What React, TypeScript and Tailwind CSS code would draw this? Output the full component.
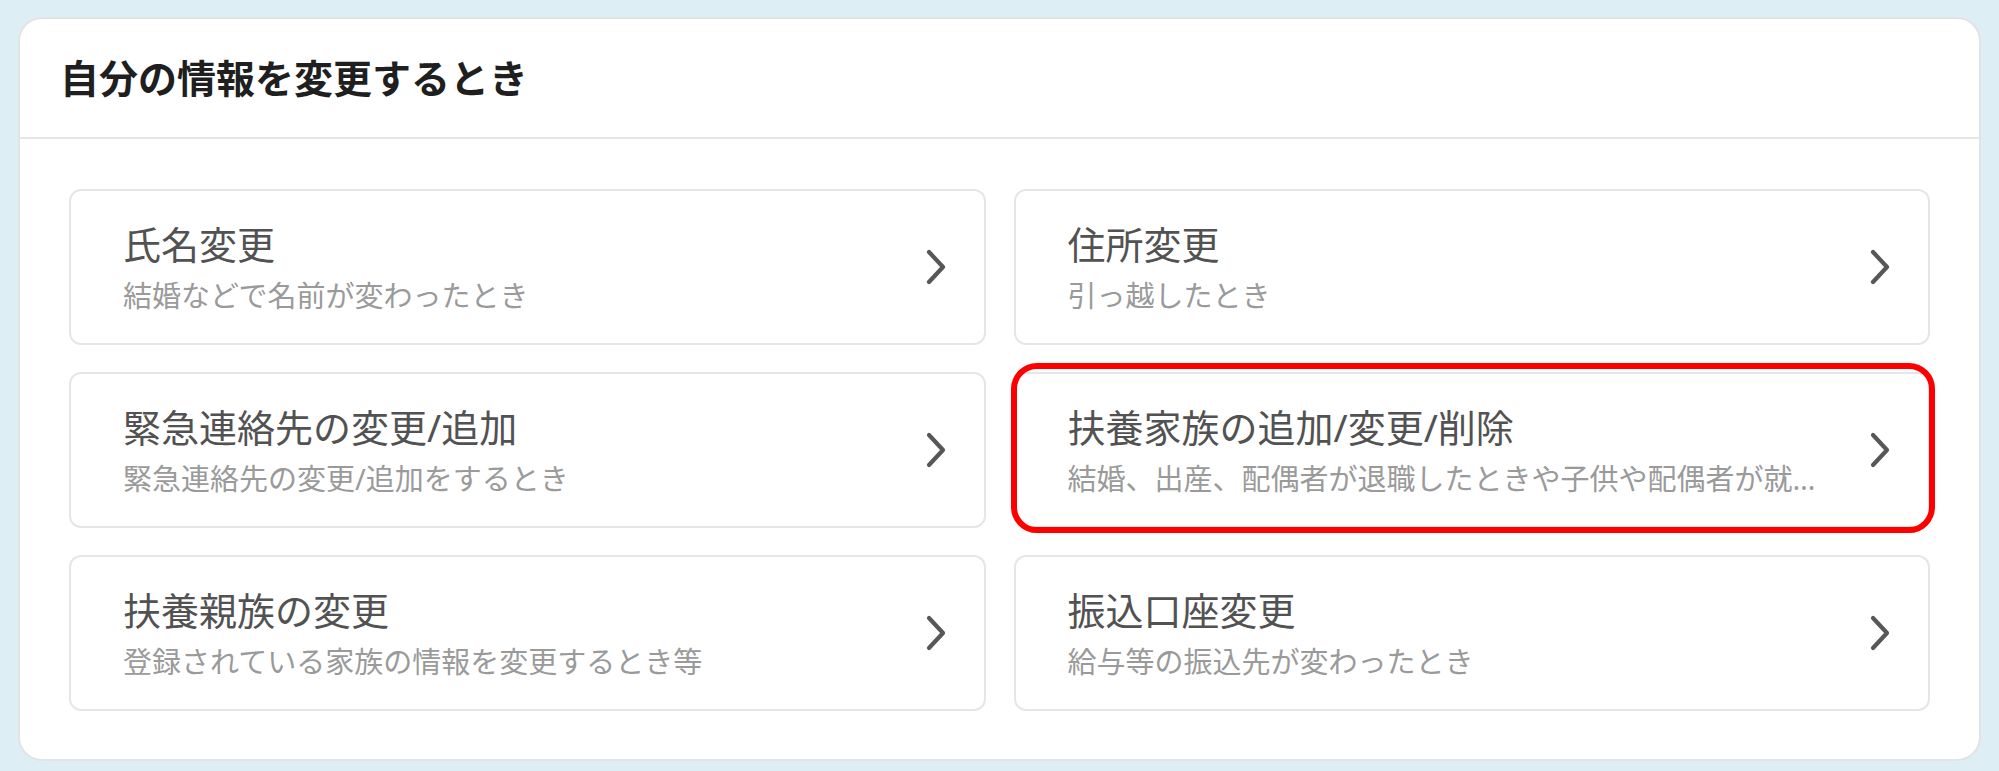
import React from "react";

type Item = { title: string; desc: string; highlight?: boolean };

const items: Item[] = [
  { title: "氏名変更", desc: "結婚などで名前が変わったとき" },
  { title: "住所変更", desc: "引っ越したとき" },
  { title: "緊急連絡先の変更/追加", desc: "緊急連絡先の変更/追加をするとき" },
  {
    title: "扶養家族の追加/変更/削除",
    desc: "結婚、出産、配偶者が退職したときや子供や配偶者が就職したとき",
    highlight: true,
  },
  { title: "扶養親族の変更", desc: "登録されている家族の情報を変更するとき等" },
  { title: "振込口座変更", desc: "給与等の振込先が変わったとき" },
];

const Chevron = () => (
  <svg width="22" height="36" viewBox="0 0 22 36" fill="none" className="shrink-0">
    <path d="M4 3 L18 18 L4 33" stroke="#575757" strokeWidth="4.2" strokeLinecap="round" strokeLinejoin="round" />
  </svg>
);

const MenuCard = ({ item }: { item: Item }) => (
  <div className="relative">
    <button className="w-full h-[156px] flex items-center gap-10 pl-[52px] pr-[37px] bg-white border-2 border-[#e6e6e6] rounded-[12px] text-left">
      <div className="flex-1 min-w-0 flex flex-col gap-[4px]">
        <div className="text-[38px] leading-[54px] text-[#525252] whitespace-nowrap">{item.title}</div>
        <div className="text-[29px] leading-[42px] text-[#9a9a9a] overflow-hidden text-ellipsis whitespace-nowrap">
          {item.desc}
        </div>
      </div>
      <Chevron />
    </button>
    {/* annotation highlight */}
    {item.highlight && (
      <span className="pointer-events-none absolute -top-[9px] -bottom-[5px] -left-[3px] -right-[5px] border-[6px] border-[#ff0000] rounded-[26px]" />
    )}
  </div>
);

export default function App() {
  return (
    <div
      className="w-full min-h-screen bg-[#ddeef5] pt-[17px] px-[18px] pb-[12px]"
      style={{ fontFamily: '"Noto Sans", "Noto Sans CJK JP", sans-serif' }}
    >
      <div className="bg-white border-2 border-[#e3e3e3] rounded-[24px] overflow-hidden">
        <div className="h-[120px] flex items-center px-[40px] border-b-2 border-[#e6e6e6]">
          <h2 className="text-[39px] font-bold text-[#1f1f1f]">自分の情報を変更するとき</h2>
        </div>
        <div className="grid grid-cols-2 gap-x-[28px] gap-y-[27px] px-[49px] pt-[50px] pb-[48px]">
          {items.map((it) => (
            <MenuCard key={it.title} item={it} />
          ))}
        </div>
      </div>
    </div>
  );
}
